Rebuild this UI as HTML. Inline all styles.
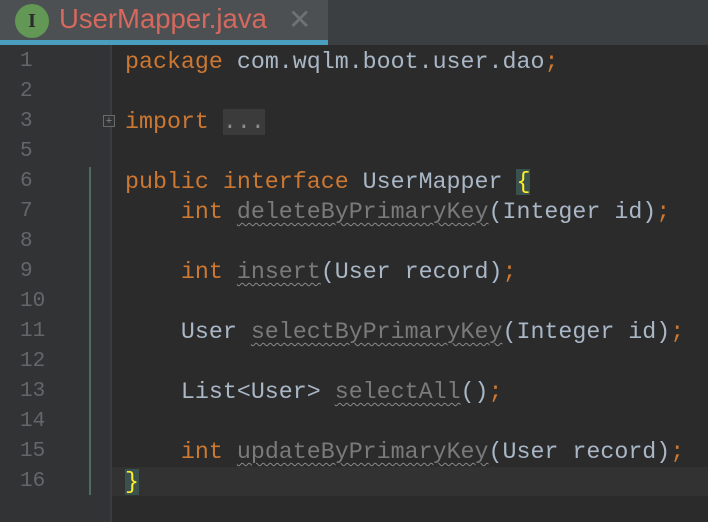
<!DOCTYPE html>
<html><head><style>
body{margin:0;width:708px;height:522px;background:#2b2b2b;overflow:hidden;position:relative;font-family:"Liberation Mono",monospace}
#tabs{position:absolute;left:0;top:0;width:708px;height:40px;background:#3c3f41}
#tab{position:absolute;left:0;top:0;width:328px;height:40px;background:#4c5053}
#ul{position:absolute;left:0;top:40px;width:328px;height:5px;background:#4a9ebf}
#under{position:absolute;left:328px;top:40px;width:380px;height:5px;background:#3c3f41}
#ic{position:absolute;left:15px;top:4px;width:34px;height:34px;border-radius:50%;background:#629755;color:#2b2b2b;font:bold 20px "Liberation Serif",serif;text-align:center;line-height:34px}
#title{position:absolute;left:59px;top:3px;font:27.5px "Liberation Sans",sans-serif;color:#d5695d}
#x{position:absolute;left:288px;top:3px;font:28px "Liberation Sans",sans-serif;color:#6e7275}
#gut{position:absolute;left:0;top:45px;width:110px;height:477px;background:#313335;border-right:2px solid #3a3d3f}
#vline{position:absolute;left:89px;top:167px;width:2px;height:328px;background:#4d6b5e}
#cur{position:absolute;left:112px;top:467px;width:596px;height:29px;background:#323232}
.ln{position:absolute;left:20px;font-size:21px;color:#646769;height:30px;line-height:30px}
.c{position:absolute;left:125px;font-size:23.3px;height:30px;line-height:30px;color:#a9b7c6;white-space:pre}
.k{color:#cc7832}.g{color:#7a7a7a;text-decoration:underline wavy #8a8a8a 1px;text-underline-offset:4px}
.dots{background:#3b3b3b;color:#8c8c8c}
#fold{position:absolute;left:103px;top:115px;width:12px;height:12px;border:1px solid #6a6a6a;box-sizing:border-box;background:#313335;color:#888;font:11px sans-serif;line-height:10px;text-align:center}
.br{background:#3b514d;color:#ffef28}
</style></head><body>
<div id="tabs"></div><div id="tab"></div><div id="ul"></div><div id="under"></div>
<div id="ic">I</div><div id="title">UserMapper.java</div><div id="x">✕</div>
<div id="gut"></div><div id="cur"></div><div id="vline"></div>
<div class="ln" style="top:47px">1</div>
<div class="ln" style="top:77px">2</div>
<div class="ln" style="top:107px">3</div>
<div class="ln" style="top:137px">5</div>
<div class="ln" style="top:167px">6</div>
<div class="ln" style="top:197px">7</div>
<div class="ln" style="top:227px">8</div>
<div class="ln" style="top:257px">9</div>
<div class="ln" style="top:287px">10</div>
<div class="ln" style="top:317px">11</div>
<div class="ln" style="top:347px">12</div>
<div class="ln" style="top:377px">13</div>
<div class="ln" style="top:407px">14</div>
<div class="ln" style="top:437px">15</div>
<div class="ln" style="top:467px">16</div>
<div id="fold">+</div>
<div class="c" style="top:47px"><span class="k">package</span> com.wqlm.boot.user.dao<span class="k">;</span></div>
<div class="c" style="top:107px"><span class="k">import</span> <span class="dots">...</span></div>
<div class="c" style="top:167px"><span class="k">public interface</span> UserMapper <span class="br">{</span></div>
<div class="c" style="top:197px">    <span class="k">int</span> <span class="g">deleteByPrimaryKey</span>(Integer id)<span class="k">;</span></div>
<div class="c" style="top:257px">    <span class="k">int</span> <span class="g">insert</span>(User record)<span class="k">;</span></div>
<div class="c" style="top:317px">    User <span class="g">selectByPrimaryKey</span>(Integer id)<span class="k">;</span></div>
<div class="c" style="top:377px">    List&lt;User&gt; <span class="g">selectAll</span>()<span class="k">;</span></div>
<div class="c" style="top:437px">    <span class="k">int</span> <span class="g">updateByPrimaryKey</span>(User record)<span class="k">;</span></div>
<div class="c" style="top:467px"><span class="br">}</span></div>
</body></html>
